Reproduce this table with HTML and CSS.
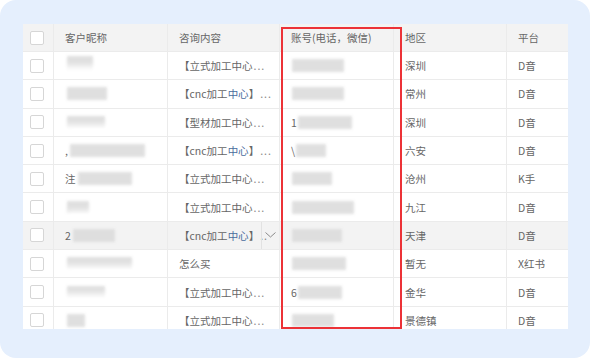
FILE: index.html
```html
<!DOCTYPE html>
<html lang="zh-CN">
<head>
<meta charset="utf-8">
<title>咨询列表</title>
<link rel="stylesheet" href="styles.css">
</head>
<body>
<div class="panel">
  <div class="grid-wrap">
    <div class="row head">
      <div class="cell chk"><span class="box"></span></div>
      <div class="cell">客户昵称</div>
      <div class="cell">咨询内容</div>
      <div class="cell">账号(电话，微信)</div>
      <div class="cell">地区</div>
      <div class="cell">平台</div>
    </div>

    <div class="row">
      <div class="cell chk"><span class="box"></span></div>
      <div class="cell name"><span class="mask m-a"></span><span class="fog f-a"></span></div>
      <div class="cell">【立式加工中心<span class="dots">...</span></div>
      <div class="cell acct"><span class="mask m-w52"></span></div>
      <div class="cell">深圳</div>
      <div class="cell">D音</div>
    </div>

    <div class="row">
      <div class="cell chk"><span class="box"></span></div>
      <div class="cell name"><span class="mask m-w40"></span></div>
      <div class="cell">【cnc加工<span class="hl">中心</span>】<span class="dots">...</span></div>
      <div class="cell acct"><span class="mask m-w52"></span></div>
      <div class="cell">常州</div>
      <div class="cell">D音</div>
    </div>

    <div class="row">
      <div class="cell chk"><span class="box"></span></div>
      <div class="cell name"><span class="mask m-w38"></span><span class="fog f-b"></span></div>
      <div class="cell">【型材加工中心<span class="dots">...</span></div>
      <div class="cell acct">1<span class="mask m-w54"></span></div>
      <div class="cell">深圳</div>
      <div class="cell">D音</div>
    </div>

    <div class="row">
      <div class="cell chk"><span class="box"></span></div>
      <div class="cell name">,<span class="mask m-w75"></span></div>
      <div class="cell">【cnc加工<span class="hl">中心</span>】<span class="dots">...</span></div>
      <div class="cell acct">\<span class="mask m-w30"></span></div>
      <div class="cell">六安</div>
      <div class="cell">D音</div>
    </div>

    <div class="row">
      <div class="cell chk"><span class="box"></span></div>
      <div class="cell name">注<span class="mask m-w54"></span></div>
      <div class="cell">【立式加工中心<span class="dots">...</span></div>
      <div class="cell acct"><span class="mask m-w40"></span></div>
      <div class="cell">沧州</div>
      <div class="cell">K手</div>
    </div>

    <div class="row">
      <div class="cell chk"><span class="box"></span></div>
      <div class="cell name"><span class="mask m-w22"></span><span class="fog f-c"></span></div>
      <div class="cell">【立式加工中心<span class="dots">...</span></div>
      <div class="cell acct"><span class="mask m-w62"></span></div>
      <div class="cell">九江</div>
      <div class="cell">D音</div>
    </div>

    <div class="row hover">
      <div class="cell chk"><span class="box"></span></div>
      <div class="cell name">2<span class="mask m-w42"></span></div>
      <div class="cell consult">【cnc加工<span class="hl">中心</span>】<span class="dots">..</span>
        <span class="drop"><svg width="11" height="6" viewBox="0 0 11 6"><path d="M0.5 0.5 L5.5 5 L10.5 0.5" fill="none" stroke="#8a8a8a" stroke-width="1"/></svg></span>
      </div>
      <div class="cell acct"><span class="mask m-w50"></span></div>
      <div class="cell">天津</div>
      <div class="cell">D音</div>
    </div>

    <div class="row">
      <div class="cell chk"><span class="box"></span></div>
      <div class="cell name"><span class="mask m-w65"></span><span class="fog f-d"></span></div>
      <div class="cell">怎么买</div>
      <div class="cell acct"><span class="mask m-w54"></span></div>
      <div class="cell">暂无</div>
      <div class="cell">X红书</div>
    </div>

    <div class="row">
      <div class="cell chk"><span class="box"></span></div>
      <div class="cell name"><span class="mask m-w38"></span><span class="fog f-e"></span></div>
      <div class="cell">【立式加工中心<span class="dots">...</span></div>
      <div class="cell acct">6<span class="mask m-w44"></span></div>
      <div class="cell">金华</div>
      <div class="cell">D音</div>
    </div>

    <div class="row">
      <div class="cell chk"><span class="box"></span></div>
      <div class="cell name"><span class="mask m-w18"></span></div>
      <div class="cell">【立式加工中心<span class="dots">...</span></div>
      <div class="cell acct"><span class="mask m-w42"></span></div>
      <div class="cell">景德镇</div>
      <div class="cell">D音</div>
    </div>

    <div class="mark"></div>
  </div>
</div>
</body>
</html>
```

FILE: styles.css
```css
* { box-sizing: border-box; }

html, body {
  margin: 0;
  padding: 0;
  background: #ffffff;
}

body {
  font-family: "Noto Sans CJK SC", "Noto Sans", sans-serif;
  font-size: 10.5px;
  color: #666666;
}

.panel {
  width: 590px;
  height: 358px;
  background: #e5effd;
  border-radius: 16px;
  padding: 24px 22px 0 23px;
}

.grid-wrap {
  position: relative;
  width: 545px;
  height: 305px;
  background: #ffffff;
  overflow: hidden;
}

.row {
  display: grid;
  grid-template-columns: 31px 114px 112px 114px 113px 61px;
  height: 28.3px;
  border-bottom: 1px solid #ebebeb;
}

.row.head {
  height: 28px;
  background: #f3f3f3;
}

.row.hover {
  background: #f3f3f3;
}

.cell {
  display: flex;
  align-items: center;
  padding-left: 11px;
  border-right: 1px solid #ebebeb;
  white-space: nowrap;
  overflow: hidden;
  position: relative;
}

.cell:last-child { border-right: none; }

.cell.chk {
  padding-left: 7px;
}

.box {
  width: 14px;
  height: 14px;
  border: 1px solid #d6d6d6;
  border-radius: 2px;
  background: #ffffff;
}

.hl { color: #4a6c9c; }

.dots {
  margin-left: 1px;
  letter-spacing: 1px;
  color: #888888;
}

/* soft grey blocks standing in for hidden contact data */
.mask {
  display: inline-block;
  height: 13px;
  background: #dcdcdc;
  filter: blur(1.6px);
  opacity: 0.9;
}

.name .mask { margin-left: 2px; }
.acct .mask { margin-left: 1px; }

.m-a { width: 26px; height: 20px; }
.m-w18 { width: 18px; }
.m-w22 { width: 22px; }
.m-w30 { width: 30px; }
.m-w38 { width: 38px; }
.m-w40 { width: 40px; }
.m-w42 { width: 42px; }
.m-w44 { width: 44px; }
.m-w50 { width: 50px; }
.m-w52 { width: 52px; }
.m-w54 { width: 54px; }
.m-w62 { width: 62px; }
.m-w65 { width: 65px; }
.m-w75 { width: 75px; }

/* white haze that spills over the row lines */
.fog {
  position: absolute;
  background: #ffffff;
  filter: blur(3px);
  border-radius: 10px;
}

.f-a { left: 4px; top: 14px; width: 50px; height: 18px; }
.f-b { left: 6px; top: 16px; width: 80px; height: 14px; }
.f-c { left: 8px; top: 18px; width: 40px; height: 16px; }
.f-d { left: 4px; top: 16px; width: 90px; height: 18px; }
.f-e { left: 4px; top: 16px; width: 70px; height: 16px; }

.consult { padding-right: 18px; }

.drop {
  position: absolute;
  right: 0;
  top: 0;
  width: 18px;
  height: 100%;
  border-left: 1px solid #e2e2e2;
  display: flex;
  align-items: center;
  justify-content: center;
}

/* red frame around the account column */
.mark {
  position: absolute;
  left: 258px;
  top: 3px;
  width: 121px;
  height: 302px;
  border: 2px solid #ec3237;
  pointer-events: none;
}
```
